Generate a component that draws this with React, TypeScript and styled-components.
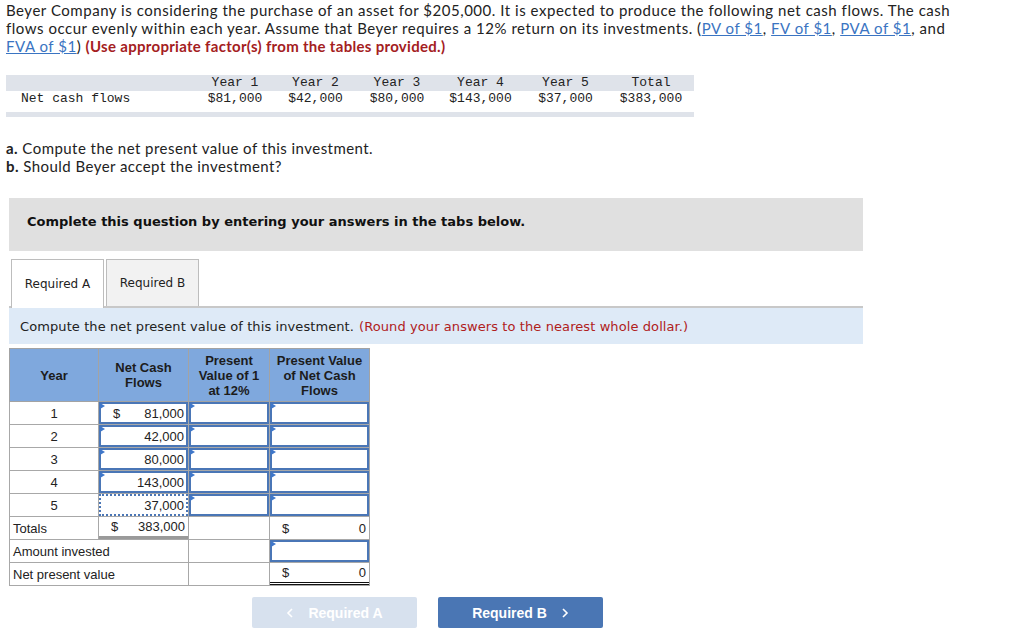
import { FC } from 'react';
import styled, { createGlobalStyle } from 'styled-components';

const GlobalStyle = createGlobalStyle`
  body {
    margin: 0;
    background: #fff;
    color: #222;
    font-family: Lato, "Open Sans", sans-serif;
  }
`;

const Page = styled.div`
  width: 1024px;
  padding-top: 1px;
`;

const Intro = styled.p`
  margin: 0 0 0 6px;
  font-size: 15px;
  line-height: 18px;
  letter-spacing: 0.53px;
  white-space: nowrap;
  color: #222;

  a {
    color: #3a74c2;
    text-decoration: underline;
  }

  strong {
    color: #a4201e;
    font-weight: 700;
    letter-spacing: 0.3px;
  }
`;

const CashFlows = styled.div`
  margin: 20px 0 0 6px;
  width: 688px;
  font-family: "Liberation Mono", monospace;
  font-size: 13px;
  color: #222;
`;

const CashRow = styled.div<{ $band?: boolean }>`
  display: grid;
  grid-template-columns: 189px 80px 81px 82px 85px 85px 86px;
  height: ${(p) => (p.$band ? '16px' : '15px')};
  line-height: ${(p) => (p.$band ? '16px' : '15px')};
  background: ${(p) => (p.$band ? '#dfe3ea' : 'transparent')};
  text-align: center;
`;

const CashLabel = styled.div`
  text-align: left;
  padding-left: 15px;
`;

const CashFooter = styled.div`
  margin-top: 6px;
  height: 5px;
  background: #dfe3ea;
`;

const Questions = styled.div`
  margin: 22px 0 0 6px;
  font-size: 15px;
  line-height: 18px;
  letter-spacing: 0.45px;

  b {
    font-weight: 700;
  }
`;

const Notice = styled.div`
  margin: 23px 0 0 9px;
  width: 854px;
  height: 53px;
  background: #e0e0e0;
  display: flex;
  align-items: center;
  padding: 0 0 7px 18px;
  box-sizing: border-box;
  font-family: "DejaVu Sans", Verdana, sans-serif;
  font-weight: 700;
  font-size: 13px;
  color: #111;
`;

const Tabs = styled.div`
  margin: 8px 0 0 9px;
  width: 854px;
  display: flex;
  gap: 2px;
  padding-left: 2px;
  box-sizing: border-box;
  border-bottom: 2px solid #c8c8c8;
`;

const Tab = styled.div<{ $active?: boolean }>`
  width: 93px;
  box-sizing: border-box;
  border: 1px solid #bdbdbd;
  border-bottom: none;
  background: ${(p) => (p.$active ? '#fff' : '#f2f2f2')};
  margin-bottom: ${(p) => (p.$active ? '-2px' : '0')};
  height: ${(p) => (p.$active ? '49px' : '47px')};
  display: flex;
  align-items: center;
  justify-content: center;
  font-family: "DejaVu Sans", Verdana, sans-serif;
  font-size: 12px;
  color: #222;
`;

const Prompt = styled.div`
  margin-left: 9px;
  width: 854px;
  height: 36px;
  background: #deeaf7;
  display: flex;
  align-items: center;
  padding-left: 11px;
  box-sizing: border-box;
  font-family: "DejaVu Sans", Verdana, sans-serif;
  font-size: 13px;
  letter-spacing: 0.09px;
  color: #222;

  span {
    color: #b0211c;
    margin-left: 5px;
  }
`;

const Worksheet = styled.table`
  margin: 4px 0 0 9px;
  border-collapse: collapse;
  table-layout: fixed;
  width: 360px;
  font-family: "Liberation Sans", Arial, sans-serif;
  font-size: 13px;
  color: #222;

  th {
    background: #7fa8dd;
    border: 1px solid #a3a3a3;
    font-weight: 700;
    line-height: 15px;
    height: 53px;
    padding: 0 2px;
    box-sizing: border-box;
    color: #1c1c1c;
  }

  td {
    border: 1px solid #a8a8a8;
    height: 23px;
    padding: 0;
    box-sizing: border-box;
    line-height: 15px;
  }
`;

const YearCell = styled.td`
  text-align: center;
`;

const LabelCell = styled.td`
  padding-left: 3px !important;
`;

const InputBox = styled.div<{ $dotted?: boolean; $marker?: boolean }>`
  position: relative;
  height: 22px;
  box-sizing: border-box;
  border: 2px ${(p) => (p.$dotted ? 'dotted' : 'solid')} #4a76b6;
  display: flex;
  align-items: center;
  justify-content: space-between;
  padding: 0 2px 0 12px;

  &::before {
    content: '';
    display: ${(p) => (p.$marker ? 'block' : 'none')};
    position: absolute;
    left: -1px;
    top: -1px;
    border-left: 5px solid #3f77c9;
    border-top: 3px solid transparent;
    border-bottom: 3px solid transparent;
  }
`;

const Amount = styled.div<{ $rule?: 'sum' | 'double' }>`
  height: 22px;
  display: flex;
  align-items: center;
  justify-content: space-between;
  padding: 0 3px 0 12px;
  box-sizing: border-box;
  border-bottom: ${(p) =>
    p.$rule === 'sum' ? '3px solid #9a9a9a' : p.$rule === 'double' ? '3px double #111' : 'none'};
`;

const Buttons = styled.div`
  margin: 11px 0 0 252px;
  display: flex;
  gap: 21px;
`;

const NavButton = styled.div<{ $disabled?: boolean }>`
  width: 165px;
  height: 31px;
  border-radius: 2px;
  background: ${(p) => (p.$disabled ? '#d7e1ee' : '#4a76b4')};
  color: #fff;
  display: flex;
  align-items: center;
  justify-content: center;
  gap: 14px;
  font-family: "Liberation Sans", Arial, sans-serif;
  font-weight: 700;
  font-size: 14px;

  svg {
    width: 8px;
    height: 10px;
  }
`;

const Chevron: FC<{ dir: 'left' | 'right' }> = ({ dir }) => (
  <svg viewBox="0 0 8 10" fill="none" stroke="#fff" strokeWidth="1.6">
    {dir === 'left' ? <path d="M6 1 L2 5 L6 9" /> : <path d="M2 1 L6 5 L2 9" />}
  </svg>
);

const flows = [
  { year: 1, value: '81,000' },
  { year: 2, value: '42,000' },
  { year: 3, value: '80,000' },
  { year: 4, value: '143,000' },
  { year: 5, value: '37,000' },
];

const headerYears = ['Year 1', 'Year 2', 'Year 3', 'Year 4', 'Year 5', 'Total'];
const headerValues = ['$81,000', '$42,000', '$80,000', '$143,000', '$37,000', '$383,000'];

const App: FC = () => (
  <Page>
    <GlobalStyle />
    <Intro>
      Beyer Company is considering the purchase of an asset for $205,000. It is expected to produce the following net
      cash flows. The cash
      <br />
      flows occur evenly within each year. Assume that Beyer requires a 12% return on its investments. (
      <a>PV of $1</a>, <a>FV of $1</a>, <a>PVA of $1</a>, and
      <br />
      <a>FVA of $1</a>) <strong>(Use appropriate factor(s) from the tables provided.)</strong>
    </Intro>

    <CashFlows>
      <CashRow $band>
        <div />
        {headerYears.map((h) => (
          <div key={h}>{h}</div>
        ))}
      </CashRow>
      <CashRow>
        <CashLabel>Net cash flows</CashLabel>
        {headerValues.map((v) => (
          <div key={v}>{v}</div>
        ))}
      </CashRow>
      <CashFooter />
    </CashFlows>

    <Questions>
      <b>a.</b> Compute the net present value of this investment.
      <br />
      <b>b.</b> Should Beyer accept the investment?
    </Questions>

    <Notice>Complete this question by entering your answers in the tabs below.</Notice>

    <Tabs>
      <Tab $active>Required A</Tab>
      <Tab>Required B</Tab>
    </Tabs>
    <Prompt>
      Compute the net present value of this investment.<span>(Round your answers to the nearest whole dollar.)</span>
    </Prompt>

    <Worksheet>
      <colgroup>
        <col style={{ width: 89 }} />
        <col style={{ width: 90 }} />
        <col style={{ width: 81 }} />
        <col style={{ width: 100 }} />
      </colgroup>
      <thead>
        <tr>
          <th>Year</th>
          <th>
            Net Cash
            <br />
            Flows
          </th>
          <th>
            Present
            <br />
            Value of 1
            <br />
            at 12%
          </th>
          <th>
            Present Value
            <br />
            of Net Cash
            <br />
            Flows
          </th>
        </tr>
      </thead>
      <tbody>
        {flows.map((f) => (
          <tr key={f.year}>
            <YearCell>{f.year}</YearCell>
            <td>
              <InputBox $marker={f.year !== 5} $dotted={f.year === 5}>
                <span>{f.year === 1 ? '$' : ''}</span>
                <span>{f.value}</span>
              </InputBox>
            </td>
            <td>
              <InputBox $marker />
            </td>
            <td>
              <InputBox $marker />
            </td>
          </tr>
        ))}
        <tr>
          <LabelCell>Totals</LabelCell>
          <td>
            <Amount $rule="sum">
              <span>$</span>
              <span>383,000</span>
            </Amount>
          </td>
          <td />
          <td>
            <Amount>
              <span>$</span>
              <span>0</span>
            </Amount>
          </td>
        </tr>
        <tr>
          <LabelCell colSpan={2}>Amount invested</LabelCell>
          <td />
          <td>
            <InputBox $marker />
          </td>
        </tr>
        <tr>
          <LabelCell colSpan={2}>Net present value</LabelCell>
          <td />
          <td>
            <Amount $rule="double">
              <span>$</span>
              <span>0</span>
            </Amount>
          </td>
        </tr>
      </tbody>
    </Worksheet>

    <Buttons>
      <NavButton $disabled>
        <Chevron dir="left" />
        Required A
      </NavButton>
      <NavButton>
        Required B
        <Chevron dir="right" />
      </NavButton>
    </Buttons>
  </Page>
);

export default App;
